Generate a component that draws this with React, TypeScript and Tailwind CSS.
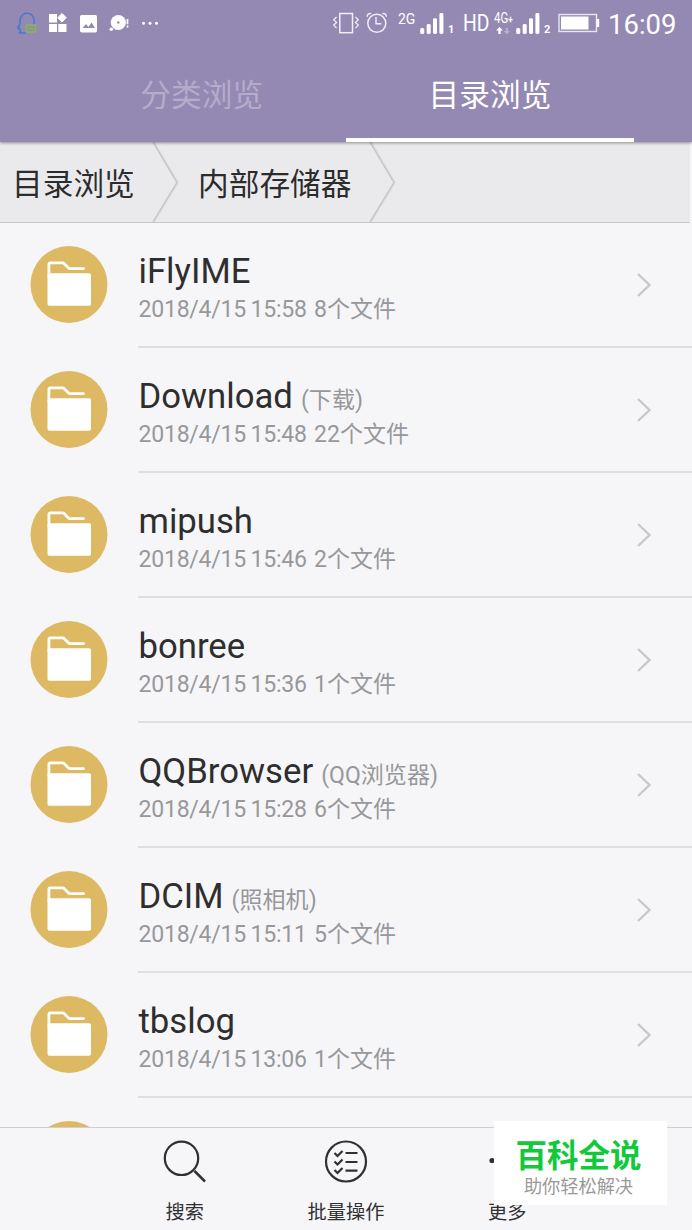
import React from 'react';

type Entry = { name: string; alias?: string; date: string; time: string; count: number };

const entries: Entry[] = [
  { name: 'iFlyIME', date: '2018/4/15', time: '15:58', count: 8 },
  { name: 'Download', alias: '(下载)', date: '2018/4/15', time: '15:48', count: 22 },
  { name: 'mipush', date: '2018/4/15', time: '15:46', count: 2 },
  { name: 'bonree', date: '2018/4/15', time: '15:36', count: 1 },
  { name: 'QQBrowser', alias: '(QQ浏览器)', date: '2018/4/15', time: '15:28', count: 6 },
  { name: 'DCIM', alias: '(照相机)', date: '2018/4/15', time: '15:11', count: 5 },
  { name: 'tbslog', date: '2018/4/15', time: '13:06', count: 1 },
];

function FolderIcon() {
  return (
    <svg className="block h-[78px] w-[78px] shrink-0" viewBox="0 0 78 78">
      <circle cx="39" cy="38.500" r="38.5" fill="#deb963" />
      <path d="M18.900 30V18.400a1.500 1.500 0 0 1 1.500-1.500H32.700a2 2 0 0 1 1.300.5L38.600 22a2 2 0 0 0 1.400.6H53.500" fill="none" stroke="#fff" strokeWidth="2.800" strokeLinecap="round" />
      <rect x="17.500" y="27.300" width="43.500" height="32.500" rx="1.800" fill="#fff" />
    </svg>
  );
}

function Signal() {
  return (
    <svg className="block h-[22px] w-[24px]" viewBox="0 0 24 22" fill="#fff">
      <rect x="0.2" y="15" width="4" height="6" rx="1.6" />
      <rect x="6.7" y="11" width="4" height="10" rx="1.4" />
      <rect x="13" y="5.2" width="4" height="15.8" rx="1.4" />
      <rect x="19.4" y="0" width="4" height="21" rx="1.4" />
    </svg>
  );
}

function StatusBar() {
  return (
    <div className="flex h-[48px] w-full items-start text-white">
      <svg className="mt-[11px] ml-[17px] h-[24px] w-[144px] shrink-0" viewBox="17 11 144 24">
        <path d="M20 24v-3c0-10 14-10.500 14-.5v4M20 24c-3 3-2 6-.5 4.500 1 1.500 1 2 1 2.500-2 2-1 2 3 2h3" fill="none" stroke="#4478d2" strokeWidth="1.500" />
        <rect x="26.500" y="25" width="9" height="7" fill="#8595a3" stroke="#8eb351" strokeWidth="1.500" />
        <path d="M28.500 28.500h5" stroke="#8eb351" />
        <path d="M49 14h8v8.500h-8zM49 24h8v8h-8zM58.300 24h8.200v8h-8.200z" fill="#fff" />
        <path d="m62 13.500 4.300 4.300-4.300 4.300-4.300-4.300z" fill="#fff" stroke="#fff" strokeLinejoin="round" />
        <rect x="80" y="15" width="17" height="17.500" rx="1.700" fill="#fff" />
        <path d="m82.500 28 3.500-4 2.500 3 3-4.500 3.500 5.500z" fill="#9489b3" />
        <circle cx="118.300" cy="22.500" r="7.600" fill="#fff" />
        <circle cx="111.300" cy="29.200" r="1.800" fill="#fff" />
        <circle cx="118.300" cy="22.500" r="1.200" fill="#9489b3" />
        <path d="M127.500 19v5.200M127.500 25.500v2" stroke="#fff" strokeWidth="1.700" />
        <circle cx="143.500" cy="23.200" r="1.500" fill="#fff" />
        <circle cx="150" cy="23.200" r="1.500" fill="#fff" />
        <circle cx="156.500" cy="23.200" r="1.500" fill="#fff" />
      </svg>
      <svg className="mt-[11px] ml-[170px] h-[24px] w-[58px] shrink-0" viewBox="331 11 58 24" fill="none" stroke="#f1eef6">
        <rect x="339.800" y="13.500" width="12.700" height="19.200" strokeWidth="1.500" />
        <path d="m336.500 17-2.700 2.700 2.700 2.700-2.700 2.700 2.700 3M355.500 17l2.800 2.700-2.800 2.700 2.800 2.700-2.800 3" strokeWidth="1.300" />
        <circle cx="376.800" cy="23.300" r="9" strokeWidth="1.500" />
        <path d="M376 17v6.800h5.500M367.200 16.800c0-2.500 1.500-3.500 4-3.300M386.300 16.800c0-2.500-1.500-3.500-4-3.300" strokeWidth="1.400" />
      </svg>
      <span className="mt-[12px] ml-[9px] w-[20px] text-[14px] leading-[14px]">2G</span>
      <div className="mt-[13px] ml-[2px]"><Signal /></div>
      <span className="mt-[24px] ml-[4px] w-[6px] text-[11px] leading-[12px] font-bold">1</span>
      <span className="mt-[11px] ml-[9px] w-[29px] origin-left scale-x-[.84] text-[23px] leading-[26px]">HD</span>
      <div className="mt-[11px] ml-[2px] flex w-[22px] flex-col">
        <span className="origin-left scale-x-[.82] text-[14px] leading-[14px]">4G<span className="text-[10px] font-bold">+</span></span>
        <svg className="ml-[2px] h-[8px] w-[17px]" viewBox="0 0 17 8">
          <path d="m3.500 0 3.500 3.500H4.700V7H2.300V3.500H0z" fill="#fff" />
          <path d="M9.800 1h2v3h2L10.800 7.500 8 4h1.800z" fill="#bbb2d0" />
        </svg>
      </div>
      <div className="mt-[13px]"><Signal /></div>
      <span className="mt-[24px] ml-[4px] w-[7px] text-[11px] leading-[12px] font-bold">2</span>
      <svg className="mt-[13px] ml-[7px] h-[20px] w-[42px] shrink-0" viewBox="0 0 42 20">
        <rect x="1" y="1.500" width="37.500" height="17" fill="none" stroke="#e9e5f1" strokeWidth="1.400" />
        <rect x="3" y="3.500" width="27.500" height="13" fill="#fff" />
        <rect x="38.500" y="6" width="2.700" height="8" fill="#fff" />
      </svg>
      <span className="mt-[9px] ml-[8px] text-[27.5px] leading-[32px] whitespace-nowrap">16:09</span>
    </div>
  );
}

function Crumb({ label, className }: { label: string; className: string }) {
  return (
    <div className={`flex h-full items-center justify-between ${className}`}>
      <span className="pt-[6px] text-[30.7px] leading-[40px] whitespace-nowrap">{label}</span>
      <svg className="block h-[80px] w-[27px] shrink-0" viewBox="0 0 27 80" fill="none">
        <path d="M1.500 0 25.500 40.500 1.500 80" stroke="#dcdcdf" strokeWidth="2.600" />
        <path d="M1 0 25 40.500 1 80" stroke="#c2c3c5" strokeWidth="1.100" />
      </svg>
    </div>
  );
}

function Row({ entry }: { entry: Entry }) {
  return (
    <li className="flex h-[125px] pl-[30px]">
      <div className="pt-[23px]"><FolderIcon /></div>
      <div className="ml-[30px] flex flex-1 border-b-2 border-[#dedee0]">
        <div className="flex-1 pt-[27px]">
          <div className="flex h-[42px] items-baseline pl-[0.5px] whitespace-nowrap">
            <span className="text-[34.7px] leading-[42px] text-[#2e2e2f]">{entry.name}</span>
            {entry.alias && <span className="ml-[8px] text-[23.07px] leading-[30px] text-[#98989a]">{entry.alias}</span>}
          </div>
          <div className="flex pt-[1px] pl-[0.5px] text-[23.07px] leading-[34px] whitespace-nowrap text-[#98989a]">
            <span className="w-[112px] tracking-[-0.25px]">{entry.date}</span>
            <span className="w-[63.5px] tracking-[-0.25px]">{entry.time}</span>
            <span>{entry.count}个文件</span>
          </div>
        </div>
        <svg className="mt-[46.5px] mr-[39px] h-[30px] w-[18px]" viewBox="0 0 18 30" fill="none">
          <path d="m3 4 11.500 11L3 26" stroke="#c8c8ca" strokeWidth="2.400" />
        </svg>
      </div>
    </li>
  );
}

function Action({ label, children }: { label: string; children: React.ReactNode }) {
  return (
    <div className="flex w-[161.3px] flex-col items-center">
      <svg className="mt-[11px] block h-[44px] w-[44px]" viewBox="0 0 44 44" fill="none" stroke="#303032" strokeWidth="2.2">{children}</svg>
      <span className="mt-[16px] text-[19.2px] leading-[28px] text-[#303032]">{label}</span>
    </div>
  );
}

export default function App() {
  return (
    <div className="relative flex h-[1230px] w-[692px] flex-col overflow-hidden bg-[#f6f6f9] [font-family:Roboto,'Noto_Sans_CJK_SC',sans-serif]">
      <header className="z-10 h-[142px] shrink-0 bg-[#9489b3] shadow-[0_1px_3px_rgba(0,0,0,0.4)]">
        <StatusBar />
        <nav className="flex h-[94px] justify-center text-[30.7px] leading-[40px]">
          <div className="flex w-[288px] justify-center pt-[28px] text-[#b5acca]">分类浏览</div>
          <div className="flex w-[288.5px] justify-center border-b-4 border-white pt-[28px] text-white">目录浏览</div>
        </nav>
      </header>
      <div className="flex h-[81px] w-[690px] shrink-0 border-b border-[#c8c8ca] bg-[#eaeaec] text-[#2c2c2d]">
        <Crumb label="目录浏览" className="w-[179px] pl-[12px]" />
        <Crumb label="内部存储器" className="w-[217px] pl-[19px]" />
      </div>
      <ul className="h-[904px] shrink-0 overflow-hidden">
        {entries.map((entry) => <Row key={entry.name} entry={entry} />)}
        <li className="flex h-[125px] pt-[23px] pl-[30px]"><FolderIcon /></li>
      </ul>
      <footer className="flex flex-1 justify-center border-t border-[#cfcfd2]">
        <Action label="搜索">
          <circle cx="18.500" cy="19.300" r="16.700" />
          <path d="m31.500 32 10.500 10.500" strokeWidth="2.500" />
        </Action>
        <Action label="批量操作">
          <circle cx="22" cy="22.500" r="20" />
          <path d="m10.500 14 3 3 5-5M10.500 22.500l3 3 5-5M10.500 31l3 3 5-5M21.500 14h12M21.500 23h12M21.500 31.700h12" />
        </Action>
        <Action label="更多">
          <g fill="#303032" stroke="none">
            <circle cx="7" cy="21.500" r="2.600" />
            <circle cx="22" cy="21.500" r="2.600" />
            <circle cx="37" cy="21.500" r="2.600" />
          </g>
        </Action>
      </footer>
      <aside className="absolute top-[1121px] left-[494px] z-20 flex h-[84px] w-[173px] flex-col items-center bg-white pr-[4px]">
        <span className="mt-[17px] text-[31.5px] leading-[38px] font-bold text-[#12c93b]">百科全说</span>
        <span className="-mt-px text-[18.2px] leading-[24px] text-[#999]">助你轻松解决</span>
      </aside>
    </div>
  );
}
